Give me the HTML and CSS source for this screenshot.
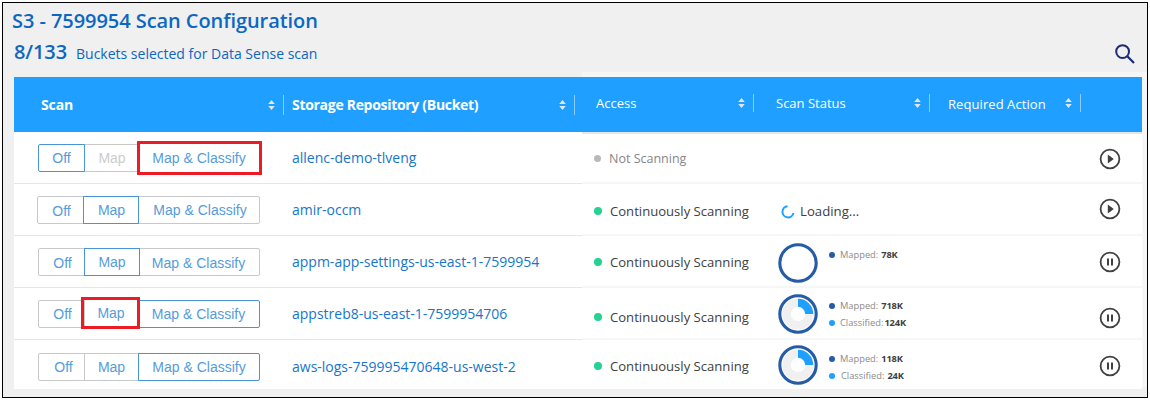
FILE: index.html
```html
<!DOCTYPE html>
<html lang="en">
<head>
<meta charset="utf-8">
<title>Scan Configuration</title>
<link rel="stylesheet" href="styles.css">
</head>
<body>
<svg class="defs" width="0" height="0">
  <symbol id="sort" viewBox="0 0 7 10"><path d="M0.2 4 3.5 0 6.8 4ZM0.2 6 3.5 10 6.8 6Z"/></symbol>
  <symbol id="play" viewBox="0 0 22 22"><circle cx="11" cy="11" r="9.4" fill="none" stroke="#404040" stroke-width="1.8"/><path d="M8.8 6.6 14.8 11 8.8 15.4Z" fill="#404040"/></symbol>
  <symbol id="pause" viewBox="0 0 22 22"><circle cx="11" cy="11" r="9.4" fill="none" stroke="#404040" stroke-width="1.8"/><path d="M8 7.5h2v7H8ZM12 7.5h2v7h-2Z" fill="#404040"/></symbol>
  <symbol id="ring" viewBox="0 0 40 40"><circle cx="20" cy="20" r="18.2" fill="#fff" stroke="#265ca5" stroke-width="3.1"/></symbol>
  <symbol id="donut" viewBox="0 0 40 40"><circle cx="20" cy="20" r="18.2" fill="#fff" stroke="#265ca5" stroke-width="3.1"/><circle cx="20" cy="20" r="11.4" fill="none" stroke="#f0f0f0" stroke-width="8.4"/><path d="M20 4.8A15.2 15.2 0 0 1 35.2 20H27.2A7.2 7.2 0 0 0 20 12.8Z" fill="#1f9fff"/></symbol>
</svg>
<main class="frame">
  <header class="top">
    <div>
      <h1 class="title">S3 - 7599954 Scan Configuration</h1>
      <p class="summary"><b class="count">8/133</b><span class="note">Buckets selected for Data Sense scan</span></p>
    </div>
    <svg class="search" viewBox="0 0 20 20"><circle cx="7.6" cy="7.6" r="6.4" fill="none" stroke="#1c2b78" stroke-width="2"/><path d="M12.3 12.3 19 19" stroke="#1c2b78" stroke-width="2.2"/></svg>
  </header>
  <section class="table">
    <div class="head">
      <div class="th th-scan"><span>Scan</span><svg class="sort"><use href="#sort"/></svg></div>
      <div class="th th-repo"><span>Storage Repository (Bucket)</span><svg class="sort"><use href="#sort"/></svg></div>
      <div class="th th-access"><span>Access</span><svg class="sort"><use href="#sort"/></svg></div>
      <div class="th th-status"><span>Scan Status</span><svg class="sort"><use href="#sort"/></svg></div>
      <div class="th th-action"><span>Required Action</span><svg class="sort"><use href="#sort"/></svg></div>
    </div>

    <div class="row row1">
      <div class="left">
        <div class="seg"><span class="off on">Off</span><span class="map dim">Map</span><span class="cls marked">Map &amp; Classify</span></div>
        <a class="repo">allenc-demo-tlveng</a>
      </div>
      <div class="right">
        <div class="access idle"><i class="dot"></i>Not Scanning</div>
        <div class="status"></div>
        <svg class="act"><use href="#play"/></svg>
      </div>
    </div>

    <div class="row row2">
      <div class="left">
        <div class="seg"><span class="off">Off</span><span class="map on">Map</span><span class="cls">Map &amp; Classify</span></div>
        <a class="repo">amir-occm</a>
      </div>
      <div class="right">
        <div class="access"><i class="dot"></i>Continuously Scanning</div>
        <div class="status"><svg class="spin" viewBox="0 0 14 14"><path d="M6.6 1.2A5.6 5.6 0 1 0 12.5 8" fill="none" stroke="#1f9fff" stroke-width="2"/></svg><span class="loading">Loading...</span></div>
        <svg class="act"><use href="#play"/></svg>
      </div>
    </div>

    <div class="row row3">
      <div class="left">
        <div class="seg"><span class="off">Off</span><span class="map on">Map</span><span class="cls">Map &amp; Classify</span></div>
        <a class="repo">appm-app-settings-us-east-1-7599954</a>
      </div>
      <div class="right">
        <div class="access"><i class="dot"></i>Continuously Scanning</div>
        <div class="status"><svg class="chart"><use href="#ring"/></svg>
          <div class="legend"><div class="key mapped">Mapped: <b>78K</b></div></div></div>
        <svg class="act"><use href="#pause"/></svg>
      </div>
    </div>

    <div class="row row4">
      <div class="left">
        <div class="seg"><span class="off">Off</span><span class="map marked">Map</span><span class="cls on">Map &amp; Classify</span></div>
        <a class="repo">appstreb8-us-east-1-7599954706</a>
      </div>
      <div class="right">
        <div class="access"><i class="dot"></i>Continuously Scanning</div>
        <div class="status"><svg class="chart"><use href="#donut"/></svg>
          <div class="legend"><div class="key mapped">Mapped: <b>718K</b></div><div class="key classified tight">Classified: <b>124K</b></div></div></div>
        <svg class="act"><use href="#pause"/></svg>
      </div>
    </div>

    <div class="row row5">
      <div class="left">
        <div class="seg"><span class="off">Off</span><span class="map">Map</span><span class="cls on">Map &amp; Classify</span></div>
        <a class="repo">aws-logs-759995470648-us-west-2</a>
      </div>
      <div class="right">
        <div class="access"><i class="dot"></i>Continuously Scanning</div>
        <div class="status"><svg class="chart"><use href="#donut"/></svg>
          <div class="legend"><div class="key mapped">Mapped: <b>118K</b></div><div class="key classified">Classified: <b>24K</b></div></div></div>
        <svg class="act"><use href="#pause"/></svg>
      </div>
    </div>
  </section>
</main>
</body>
</html>
```
FILE: styles.css
```css
* { box-sizing: border-box; }
body { margin: 0; background: #fff; font-family: "Open Sans", sans-serif; }
.defs { display: block; }
.frame {
  width: 1146px; height: 396px; margin: 2px 0 0 2px; border: 1px solid #000; overflow: hidden;
  background:
    linear-gradient(#f6f6f6, #f6f6f6) 579px 69px / 565px 5px no-repeat,
    linear-gradient(#f6f6f6, #f6f6f6) 1139px 74px / 5px 310px no-repeat,
    #f0f0f0;
}

.top { display: flex; justify-content: space-between; height: 74px; padding: 0 12px 0 9px; color: #0c67c2; }
.title { margin: 4px 0 0; font-size: 20px; line-height: 28px; font-weight: 600; letter-spacing: -0.06px; white-space: nowrap; }
.summary { display: flex; align-items: baseline; margin: 3px 0 0 2px; line-height: 28px; white-space: nowrap; }
.count { width: 62px; font-size: 20px; font-weight: 600; letter-spacing: -0.1px; }
.note { font-size: 14px; }
.search { width: 20px; height: 20px; margin-top: 41px; }

.table { width: 1128px; margin-left: 11px; background: #fff; }
.head { display: flex; height: 55px; background: #1f9fff; color: #fff; }
.th { display: flex; align-items: center; justify-content: space-between; height: 20px; margin-top: 18px; border-right: 1px solid #8bcdff; font-size: 13px; line-height: 18px; white-space: nowrap; }
.th span { margin-bottom: 1px; }
.sort { width: 7px; height: 10px; fill: #dfe6ec; }
.th-scan { width: 270px; padding: 0 8px 0 27px; font-size: 14px; font-weight: 700; letter-spacing: -0.1px; }
.th-repo { width: 291px; padding: 0 8px 0 8px; font-size: 14px; font-weight: 700; letter-spacing: -0.3px; }
.th-scan span, .th-repo span { margin-bottom: 0; }
.th-access, .th-status, .th-action { height: 18px; margin-top: 17px; }
.th-access { width: 179px; padding: 0 8px 0 21px; }
.th-status { width: 176px; padding: 0 8px 0 22px; }
.th-action { width: 151px; padding: 0 8px 0 18px; }
.th-action span { margin: 2px 0 0; letter-spacing: 0.07px; }

.row { display: flex; height: 52px; }
.left { display: flex; align-items: flex-start; width: 568px; border-bottom: 1px solid #e6e6e6; }
.right { display: flex; align-items: flex-start; width: 560px; border-bottom: 2px solid #f6f6f6; }
.row1 .right { border-top: 2px solid #e4e7ea; }
.row5 { height: 49px; }
.row5 .left, .row5 .right { border-bottom: 0; }

.seg { display: flex; width: 222px; height: 28px; margin: 12px 32px 0 24px; font: 14px/26px "Liberation Sans", Arial, sans-serif; color: #559cdb; }
.row2 .seg { width: 223px; margin-left: 23px; }
.row5 .seg { margin-top: 13px; }
.seg span { border: 1px solid #c9c9c9; text-align: center; white-space: nowrap; }
.seg .off { width: 47px; border-radius: 2px 0 0 2px; }
.seg .map { width: 56px; margin-left: -1px; }
.seg .cls { flex: 1; margin-left: -1px; border-radius: 0 2px 2px 0; }
.seg .on { border-color: #4795d8; z-index: 1; }
.seg .dim { color: #cccccc; }
.seg .marked { z-index: 2; border: 3px solid #ec1c24; border-radius: 0; }
.row1 .cls.marked { height: 34px; margin: -3px -2px 0 -3px; padding-right: 1px; line-height: 28px; }
.row4 .map.marked { flex: 0 0 59px; height: 32px; margin: -3px -2px 0 -4px; padding-left: 1px; line-height: 26px; }
.row2 .off { padding-left: 2px; line-height: 28px; }
.row2 .cls { padding-left: 2px; }
.row2 .map { padding-left: 1px; }
.row3 .off, .row4 .off { padding-left: 2px; }
.row3 .off, .row3 .cls { line-height: 28px; }
.row3 .cls { padding-right: 2px; }
.row5 .off { padding-left: 4px; }
.row5 .map { width: 55px; }

.repo { margin-top: 16px; font-size: 14px; line-height: 20px; color: #1676ca; white-space: nowrap; }
.row5 .repo { margin-top: 17px; }

.access { display: flex; align-items: center; width: 193px; margin-top: 17px; padding-left: 12px; font-size: 13.1px; line-height: 20px; color: #404040; white-space: nowrap; }
.idle { margin-top: 14px; font-size: 12.5px; line-height: 21px; color: #868686; }
.row3 .access { margin-top: 16px; }
.row4 .access { margin-top: 19px; }
.row5 .access { margin-top: 16px; }
.dot { width: 8px; height: 8px; margin-right: 8px; border-radius: 50%; background: #26d191; }
.idle .dot { width: 7px; height: 7px; background: #b9b9b9; }

.status { display: flex; align-items: flex-start; width: 324px; }
.spin { width: 14px; height: 14px; margin: 21px 5px 0 6px; }
.loading { margin-top: 17px; font-size: 13.2px; line-height: 20px; color: #404040; }
.chart { width: 40px; height: 40px; margin: 7px 11px 0 3px; }
.row4 .chart { margin-top: 6px; }
.row5 .chart { margin-top: 5px; }
.legend { margin-top: 10px; }
.row4 .legend { margin-top: 9px; }
.row5 .legend { margin-top: 10px; }
.key { display: flex; align-items: center; gap: 3px; height: 17px; font-size: 9.3px; line-height: 17px; color: #8b8b8b; white-space: nowrap; }
.key::before { content: ""; width: 6px; height: 6px; margin-right: 2px; border-radius: 50%; background: #265ca5; }
.key.classified::before { background: #1f9fff; margin-right: 3px; }
.key.tight::before { margin-right: 4px; }
.key.tight { gap: 1px; }
.key b { color: #404040; letter-spacing: -0.15px; }

.act { width: 22px; height: 22px; margin-top: 14px; }
.row1 .act { margin-top: 14px; }
.row3 .act { margin-top: 15px; }
.row4 .act { margin-top: 19px; }
.row5 .act { margin-top: 15px; }
```
